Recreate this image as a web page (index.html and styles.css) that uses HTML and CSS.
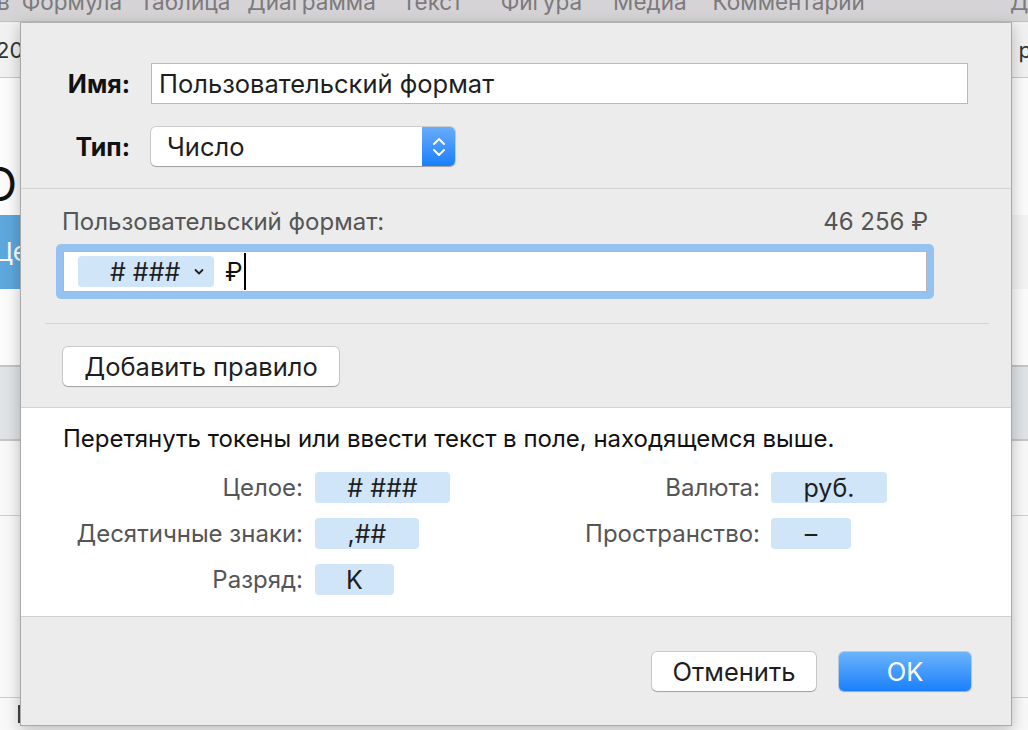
FILE: index.html
```html
<!DOCTYPE html>
<html lang="ru">
<head>
<meta charset="utf-8">
<title>Пользовательский формат</title>
<link rel="stylesheet" href="styles.css">
</head>
<body>
<div class="app">
  <div class="menubar">
    <span class="m1">в</span><span class="m2">Формула</span><span class="m3">Таблица</span><span class="m4">Диаграмма</span><span class="m5">Текст</span><span class="m6">Фигура</span><span class="m7">Медиа</span><span class="m8">Комментарии</span><span class="m9">Д</span>
  </div>
  <div class="doc">
    <div class="doc-row r1"><span class="frag-l">20</span><span class="frag-r">р</span></div>
    <div class="doc-row r2"><span class="big-o">О</span></div>
    <div class="doc-row r3"><span class="blue-cell">Це</span></div>
    <div class="doc-row r4"></div>
    <div class="doc-row r5"></div>
    <div class="doc-row r6"></div>
    <div class="doc-row r7"></div>
    <div class="doc-row r8"><span class="dark-tab"></span></div>
  </div>

  <div class="dialog">
    <section class="sec-top">
      <label class="lbl-bold">Имя:</label>
      <div class="name-field">Пользовательский формат</div>
      <label class="lbl-bold">Тип:</label>
      <div class="popup">
        <span class="popup-text">Число</span>
        <span class="stepper">
          <svg width="14" height="22" viewBox="0 0 14 22"><polyline points="2,8 7,3 12,8" fill="none" stroke="#fff" stroke-width="2" stroke-linecap="round" stroke-linejoin="round"/><polyline points="2,14 7,19 12,14" fill="none" stroke="#fff" stroke-width="2" stroke-linecap="round" stroke-linejoin="round"/></svg>
        </span>
      </div>
    </section>

    <section class="sec-format">
      <div class="fmt-wrap">
        <div class="fmt-head">
          <span class="gray-lbl">Пользовательский формат:</span>
          <span class="gray-lbl">46 256 ₽</span>
        </div>
        <div class="focus-ring">
          <div class="fmt-field">
            <span class="token token-field"># ###<svg class="chev" width="10" height="8" viewBox="0 0 10 8"><polyline points="1.5,2 5,5.5 8.5,2" fill="none" stroke="#222" stroke-width="1.8" stroke-linecap="round" stroke-linejoin="round"/></svg></span>
            <span class="ruble">₽</span><span class="caret"></span>
          </div>
        </div>
      </div>
      <div class="sep-inner"></div>
      <button class="btn btn-add">Добавить правило</button>
    </section>

    <section class="sec-tokens">
      <p class="hint">Перетянуть токены или ввести текст в поле, находящемся выше.</p>
      <div class="token-grid">
        <span class="gray-lbl tl">Целое:</span>
        <span class="token tok tw1"># ###</span>
        <span class="gray-lbl tl">Валюта:</span>
        <span class="token tok tok-r tw4">руб.</span>

        <span class="gray-lbl tl">Десятичные знаки:</span>
        <span class="token tok tw2">,##</span>
        <span class="gray-lbl tl">Пространство:</span>
        <span class="token tok tok-r tw5">–</span>

        <span class="gray-lbl tl">Разряд:</span>
        <span class="token tok tw3">K</span>
      </div>
    </section>

    <footer class="sec-foot">
      <button class="btn btn-cancel">Отменить</button>
      <button class="btn btn-ok">OK</button>
    </footer>
  </div>
</div>
</body>
</html>
```

FILE: styles.css
```css
* { box-sizing: border-box; }
html, body { margin: 0; padding: 0; }
body {
  width: 1028px;
  height: 730px;
  overflow: hidden;
  font-family: Inter, "Noto Sans", "DejaVu Sans", sans-serif;
  background: #f3f3f3;
}
.app { position: relative; width: 1028px; height: 730px; overflow: hidden; }

/* background app */
.menubar {
  height: 22px;
  background: #d5d3d5;
  border-bottom: 1px solid #c2c0c2;
  display: flex;
  align-items: flex-start;
  overflow: hidden;
  white-space: nowrap;
  font-size: 22.5px;
  color: #7c7a7c;
  line-height: 22px;
}
.menubar span { flex: none; transform: translateY(-9px); }
.m1 { margin-left: -3px; }
.m2 { margin-left: 12px; }
.m3 { margin-left: 17px; }
.m4 { margin-left: 17px; }
.m5 { margin-left: 26px; }
.m6 { margin-left: 38px; }
.m7 { margin-left: 31px; }
.m8 { margin-left: 26px; }
.m9 { margin-left: 145px; }

.doc { display: flex; flex-direction: column; }
.doc-row { position: relative; display: flex; justify-content: space-between; }
.r1 { height: 56px; border-bottom: 1px solid #c9c9c9; background: #f1f1f1; align-items: center; font-size: 22px; color: #333; }
.frag-l { margin-left: -4px; }
.frag-r { margin-right: -4px; }
.r2 { height: 137px; background: #fbfbfb; align-items: flex-end; }
.big-o { font-size: 46px; line-height: 46px; margin-left: -18px; margin-bottom: 8px; color: #111; }
.r3 { height: 74px; }
.blue-cell { width: 80px; background: #5da7dc; color: #fff; font-size: 26px; line-height: 74px; padding-left: 4px; margin-left: -10px; }
.r4 { height: 76px; background: #fbfbfb; }
.r5 { height: 76px; background: #dfe3e6; border-top: 2px solid #c2c6c9; border-bottom: 2px solid #c2c6c9; }
.r6 { height: 75px; background: #f8f8f8; border-bottom: 1px solid #cfcfcf; }
.r7 { height: 182px; background: #f8f8f8; border-bottom: 1px solid #cfcfcf; }
.r8 { height: 40px; background: #f8f8f8; }
.dark-tab { position: absolute; left: 18px; top: 7px; width: 3px; height: 18px; background: #444; }

/* dialog sheet */
.dialog {
  position: absolute;
  left: 20px;
  top: 22px;
  width: 992px;
  height: 704px;
  background: #ececec;
  border: 1px solid #a9a9a9;
  border-top: 1px solid #b0b0b0;
  box-shadow: 0 4px 14px rgba(0,0,0,0.25);
  display: flex;
  flex-direction: column;
  color: #222;
}

.sec-top {
  display: grid;
  grid-template-columns: 109px 1fr;
  grid-template-rows: 41px 39px;
  column-gap: 21px;
  row-gap: 23px;
  align-items: center;
  padding: 40px 43px 22px 0;
  border-bottom: 1px solid #d2d2d2;
  height: 166px;
}
.lbl-bold { font-weight: 700; font-size: 25px; text-align: right; color: #111; }
.name-field {
  height: 41px;
  background: #fff;
  border: 1px solid #b9b9b9;
  font-size: 25.5px;
  line-height: 39px;
  padding-left: 7px;
  color: #1e1e1e;
}
.popup {
  width: 304px;
  height: 39px;
  background: #fff;
  border-radius: 5px;
  box-shadow: 0 0 0 1px rgba(0,0,0,0.13), 0 1px 1px rgba(0,0,0,0.22);
  display: flex;
  align-items: center;
  justify-content: space-between;
  overflow: hidden;
}
.popup-text { font-size: 25.5px; padding-left: 16px; color: #1e1e1e; }
.stepper {
  width: 33px;
  height: 100%;
  background: linear-gradient(#6aacf9, #1a7ffb);
  display: flex;
  align-items: center;
  justify-content: center;
}

.sec-format {
  height: 220px;
  padding: 19px 0 0 0;
  border-bottom: 1px solid #d4d4d4;
  display: flex;
  flex-direction: column;
}
.fmt-wrap { margin-left: 35px; width: 878px; }
.fmt-head {
  display: flex;
  justify-content: space-between;
  padding: 0 6px;
  height: 28px;
  line-height: 28px;
  margin-bottom: 8px;
}
.gray-lbl { font-size: 24px; color: #555; line-height: 28px; }
.focus-ring {
  height: 55px;
  background: #96c2f1;
  border-radius: 5px;
  padding: 7px;
}
.fmt-field {
  height: 41px;
  background: #fff;
  border: 1px solid #b5b5b5;
  display: flex;
  align-items: center;
  padding-left: 14px;
}
.token {
  background: #d1e5f9;
  border-radius: 4px;
  font-size: 25px;
  color: #1e1e1e;
  display: inline-flex;
  align-items: center;
  justify-content: center;
  height: 31px;
}
.token-field { width: 136px; padding-left: 32px; gap: 14px; justify-content: flex-start; }
.chev { margin-top: 1px; }
.ruble { font-size: 25px; margin-left: 11px; color: #111; }
.caret { width: 2px; height: 37px; background: #000; margin-left: 1px; }

.sep-inner { margin: 24px 0 0 24px; width: 944px; height: 1px; background: #d3d3d3; }

.btn {
  font-family: inherit;
  font-size: 25.5px;
  height: 39px;
  border: none;
  border-radius: 5px;
  background: #fff;
  color: #1e1e1e;
  box-shadow: 0 0 0 1px rgba(0,0,0,0.14), 0 1px 1px rgba(0,0,0,0.2);
  padding: 0;
}
.btn-add { margin: 23px 0 0 42px; width: 276px; }

.sec-tokens {
  flex: 1 0 auto;
  height: 209px;
  background: #fff;
  border-bottom: 1px solid #d0d0d0;
  padding: 17px 0 0 42px;
}
.hint { margin: 0; font-size: 24px; line-height: 28px; color: #111; }
.token-grid {
  margin-top: 19px;
  display: grid;
  grid-template-columns: 240px 271px 186px auto;
  grid-auto-rows: 31px;
  row-gap: 15px;
  align-items: center;
}
.tl { text-align: right; }
.tok { margin-left: 12px; }
.tok-r { margin-left: 11px; }
.tw1 { width: 135px; }
.tw2 { width: 104px; }
.tw3 { width: 79px; }
.tw4 { width: 116px; }
.tw5 { width: 80px; }

.sec-foot {
  height: 108px;
  display: flex;
  justify-content: flex-end;
  padding: 35px 40px 0 0;
  gap: 23px;
}
.btn-cancel { width: 164px; }
.btn-ok {
  width: 132px;
  color: #fff;
  background: linear-gradient(#6cb4fb, #1a80fb);
  box-shadow: 0 0 0 1px rgba(20,100,220,0.25), 0 1px 1px rgba(0,0,0,0.18);
}
```
